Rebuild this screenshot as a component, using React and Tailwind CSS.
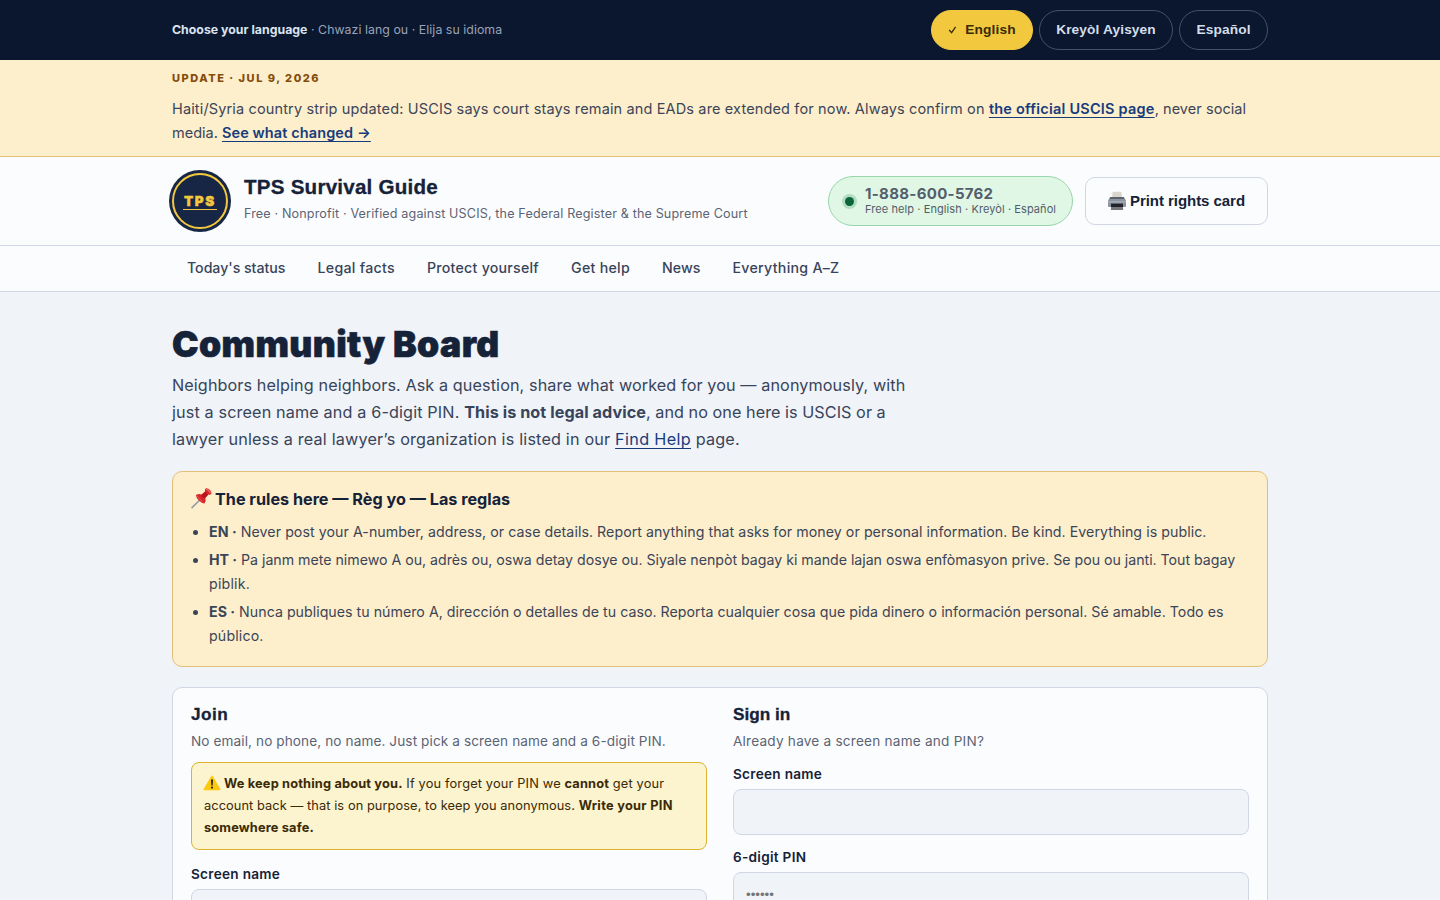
import { useState } from 'react';

const languages = [
  { name: 'English', box: 'w-[102px]' },
  { name: 'Kreyòl Ayisyen', box: 'w-[134px]' },
  { name: 'Español', box: 'w-[89px]' },
];

const navItems = [
  { label: "Today's status", style: 'w-[98.5px] tracking-[-0.04px]' },
  { label: 'Legal facts', style: 'w-[77.5px] tracking-[0.29px]' },
  { label: 'Protect yourself', style: 'w-[112px] tracking-[0.24px]' },
  { label: 'Get help', style: 'w-[59px] tracking-[0.28px]' },
  { label: 'News', style: 'w-[38.5px] tracking-[0.06px]' },
  { label: 'Everything A–Z', style: 'w-[107px] tracking-[0.27px]' },
];

function PrinterIcon() {
  return (
    <svg viewBox="0 0 20 20" className="w-5 h-5 -ml-px mr-px shrink-0">
      <path d="M5 7 L5.6 1.5 Q5.7 0.8 6.4 0.8 H13.6 Q14.3 0.8 14.4 1.5 L15 7 Z" fill="#d9d4cd" />
      <path d="M3.2 6 H16.8 L19 9.5 V15 Q19 16 18 16 H2 Q1 16 1 15 V9.5 Z" fill="#8b939e" />
      <path d="M3.4 6 H16.6 L17.4 8 H2.6 Z" fill="#5b626c" />
      <path d="M1 10 H19 V11.6 H1 Z" fill="#a3aab3" />
      <path d="M4 12.6 H16 V16.4 H4 Z" fill="#20242a" />
      <path d="M4.2 16 H15.8 L16.2 19 H3.8 Z" fill="#77767a" />
    </svg>
  );
}

function PinIcon() {
  return (
    <svg viewBox="0 0 22 22" className="w-[22px] h-[22px] mb-0.5 shrink-0">
      <path d="M9.6 12.2 L1 20.6" stroke="#929aa3" strokeWidth="1.5" strokeLinecap="round" />
      <path d="M4.8 8.2 Q7.2 6.4 10.4 7.4 L14 4.4 Q13.4 2 15 1.2 Q17.2 1 19.2 3.2 Q21 5.2 20.4 7 Q19.4 8.2 17.4 7.6 L14.4 11 Q15.4 14.4 13.4 16.4 Q10.6 16 7.8 13.4 Q5.2 10.6 4.8 8.2 Z" fill="#d9262b" />
      <path d="M10.2 8.6 L14.6 4.6 Q15.4 6.6 17.2 7.6 L13.4 11.4 Q11.2 10.6 10.2 8.6 Z" fill="#b5161f" />
      <path d="M15.2 2.2 Q17.4 2.6 19.4 5.8" stroke="#f36a63" strokeWidth="1.3" fill="none" strokeLinecap="round" />
      <path d="M6 8.8 Q7.4 12 11.4 14.4" stroke="#ee5350" strokeWidth="1" fill="none" strokeLinecap="round" />
    </svg>
  );
}

function WarningIcon() {
  return (
    <svg viewBox="0 0 18 16" className="inline-block w-[18px] h-4 align-[-3px] -ml-px mr-[3px]">
      <path d="M9 1.4 L16.6 14.4 H1.4 Z" fill="#fdc90e" stroke="#fdc90e" strokeWidth="1.6" strokeLinejoin="round" />
      <path d="M8 4.6 H10 L9.7 10.4 H8.3 Z" fill="#2b2410" />
      <circle cx="9" cy="12.6" r="1.1" fill="#2b2410" />
    </svg>
  );
}

function Container({ className = '', children }) {
  return <div className={`w-[1096px] mx-auto ${className}`}>{children}</div>;
}

function Link({ className = '', children }) {
  return (
    <a href="#" className={`text-[#163c7c] underline decoration-1 underline-offset-[3px] [text-decoration-skip-ink:none] ${className}`}>
      {children}
    </a>
  );
}

function LanguageBar() {
  const [current, setCurrent] = useState('English');

  return (
    <div className="bg-[#0b172e] h-[60px]">
      <Container className="h-full flex items-center justify-between">
        <p className="text-[12.3px] text-[#98a3b8] tracking-[0.06px] whitespace-nowrap">
          <strong className="text-[#dce4f0] tracking-[0.02px]">Choose your language</strong> · Chwazi lang ou · Elija su idioma
        </p>
        <div className="flex gap-1.5">
          {languages.map(({ name, box }) => (
            <button
              key={name}
              onClick={() => setCurrent(name)}
              className={`h-10 rounded-full border font-[Liberation_Sans] text-[13.7px] tracking-[0.13px] font-bold flex items-center justify-center whitespace-nowrap pt-px ${box} ${
                current === name ? 'bg-[#f2c83f] border-[#f2c83f] text-[#3a2a06]' : 'border-[#45516b] text-[#d5deeb]'
              }`}
            >
              {current === name && (
                <svg viewBox="0 0 10 10" className="w-2.5 h-2.5 mr-[7px] mb-px" fill="none" stroke="currentColor" strokeWidth="1.3">
                  <path d="M1.2 5 L3.6 7.6 L7.6 1.8" />
                </svg>
              )}
              {name}
            </button>
          ))}
        </div>
      </Container>
    </div>
  );
}

function UpdateBanner() {
  return (
    <div className="bg-[#fdeecc] border-b border-[#e3c078] h-[97px] pt-2.5">
      <Container>
        <div className="text-[11px] leading-4 font-extrabold tracking-[1.52px] text-[#854d0b]">UPDATE · JUL 9, 2026</div>
        <p className="mt-[11px] text-[14.5px] leading-6 tracking-[0.143px] text-[#3b4557] whitespace-nowrap">
          Haiti/Syria country strip updated: USCIS says court stays remain and EADs are extended for now. Always confirm on{' '}
          <Link className="font-semibold tracking-[0.22px]">the official USCIS page</Link>
          <span className="tracking-[0.06px]">, never social</span>
          <br />
          <span className="tracking-normal">media. </span>
          <Link className="font-semibold tracking-[0.1px]">See what changed →</Link>
        </p>
      </Container>
    </div>
  );
}

function Header() {
  return (
    <header className="bg-[#fbfcfe] border-b border-[#d0d6e3] h-[89px]">
      <Container className="h-full flex items-center">
        <div className="w-14 h-14 rounded-full border-2 border-[#f2c83f] bg-[#172645] ring-3 ring-[#172645] flex items-center justify-center shrink-0">
          <span className="w-[34px] h-[18px] border-b border-[#f2c83f] text-[13.5px] leading-[18px] font-black tracking-[1.5px] text-[#f2c83f] [-webkit-text-stroke:0.4px_#f2c83f] pl-px whitespace-nowrap">TPS</span>
        </div>
        <div className="ml-4 flex-1 whitespace-nowrap">
          <div className="font-[Liberation_Sans] text-[20.6px] leading-6 font-bold tracking-[0.22px] text-[#152238] [-webkit-text-stroke:0.3px_#152238]">TPS Survival Guide</div>
          <div className="text-[12.6px] leading-5 tracking-[0.137px] text-[#5b6474] pt-[5px] mb-1">
            Free · Nonprofit · Verified against USCIS, the Federal Register &amp; the Supreme Court
          </div>
        </div>
        <a href="#" className="w-[245px] h-[50px] rounded-full bg-[#dff7e4] border border-[#97d6ab] flex items-center pl-4 whitespace-nowrap">
          <span className="w-[9px] h-[9px] rounded-full bg-[#0a6639] ring-3 ring-[#b3dcc1] shrink-0" />
          <span className="ml-[11px] mb-0.5 flex flex-col text-[#545d6b]">
            <span className="text-[15px] leading-[17px] font-bold tracking-[0.31px]">1-888-600-5762</span>
            <span className="text-[11px] leading-[14px] tracking-[0.084px]">Free help · English · Kreyòl · Español</span>
          </span>
        </a>
        <button className="ml-3 w-[183px] h-12 rounded-[10px] border border-[#d0d6e3] font-[Liberation_Sans] text-[15px] font-bold text-[#152238] flex items-center gap-0.5 pl-[22px] whitespace-nowrap">
          <PrinterIcon />
          <span className="tracking-[-0.05px]">Print rights card</span>
        </button>
      </Container>
    </header>
  );
}

function Nav() {
  return (
    <nav className="bg-[#fbfcfe] border-b border-[#d0d6e3] h-[46px]">
      <Container className="h-full flex items-center gap-8 pl-[15px] pb-0.5 text-[14.2px] font-medium text-[#38445a]">
        {navItems.map((item) => (
          <a key={item.label} href="#" className={`whitespace-nowrap ${item.style}`}>{item.label}</a>
        ))}
      </Container>
    </nav>
  );
}

function Rules() {
  return (
    <section className="mt-[18px] h-[196px] rounded-[10px] border border-[#e3c078] bg-[#fdeecc] px-[18px] pt-[15px]">
      <h2 className="flex items-center gap-0.5 h-6 text-[16.2px] font-bold text-[#152238] whitespace-nowrap">
        <PinIcon />
        The rules here — Règ yo — Las reglas
      </h2>
      <ul className="mt-[9px] pl-[18px] list-disc flex flex-col gap-1 text-[14.2px] leading-6 text-[#3b4557] whitespace-nowrap">
        <li className="tracking-[0.056px]">
          <strong>EN ·</strong> Never post your A-number, address, or case details. Report anything that asks for money or personal information. Be kind. Everything is public.
        </li>
        <li className="tracking-[-0.022px]">
          <strong>HT ·</strong> Pa janm mete nimewo A ou, adrès ou, oswa detay dosye ou. Siyale nenpòt bagay ki mande lajan oswa enfòmasyon prive. Se pou ou janti. Tout bagay
          <br />
          <span className="tracking-[0.2px]">piblik.</span>
        </li>
        <li className="tracking-[0.022px]">
          <strong>ES ·</strong> Nunca publiques tu número A, dirección o detalles de tu caso. Reporta cualquier cosa que pida dinero o información personal. Sé amable. Todo es
          <br />
          <span className="tracking-[0.15px]">público.</span>
        </li>
      </ul>
    </section>
  );
}

function Field({ label, placeholder, className = '' }) {
  return (
    <label className={`block ${className}`}>
      <span className="block text-[13.6px] leading-5 font-semibold tracking-[0.28px] text-[#152238]">{label}</span>
      <input
        placeholder={placeholder}
        className="mt-[5px] block w-full h-[46px] rounded-lg border border-[#d0d6e3] bg-[#f0f3f8] px-3 pb-1 text-[16px] placeholder:text-[#757575] placeholder:text-[13.3px] placeholder:font-[Liberation_Sans]"
      />
    </label>
  );
}

function Accounts() {
  return (
    <section className="mt-5 rounded-[10px] border border-[#d0d6e3] bg-[#fbfcfe] px-[18px] pt-3.5 h-[420px] grid grid-cols-2 gap-[26px] whitespace-nowrap">
      <div>
        <h2 className="font-[Liberation_Sans] text-[17.2px] leading-6 font-bold tracking-[0.5px] text-[#152238] [-webkit-text-stroke:0.3px_#152238]">Join</h2>
        <p className="mt-1 text-[13.6px] leading-[22px] tracking-[0.1px] text-[#5b6474]">
          No email, no phone, no name. Just pick a screen name and a 6-digit PIN.
        </p>
        <div className="mt-2.5 h-[88px] rounded-lg border border-[#ddb32f] bg-[#fcf3cf] px-3 pt-2.5 text-[12.8px] leading-[22px] tracking-[0.16px] text-[#3a2a06]">
          <p className="h-[22px]">
            <WarningIcon />
            <strong>We keep nothing about you.</strong> If you forget your PIN we <strong>cannot</strong> get your
          </p>
          <p>
            <span className="tracking-[0.08px]">account back — that is on purpose, to keep you anonymous. </span>
            <strong className="tracking-[0.29px]">Write your PIN</strong>
          </p>
          <p><strong>somewhere safe.</strong></p>
        </div>
        <Field label="Screen name" className="mt-3.5" />
      </div>
      <div>
        <h2 className="font-[Liberation_Sans] text-[17.2px] leading-6 font-bold text-[#152238] [-webkit-text-stroke:0.3px_#152238]">Sign in</h2>
        <p className="mt-1 text-[13.6px] leading-[22px] tracking-[0.22px] text-[#5b6474]">Already have a screen name and PIN?</p>
        <Field label="Screen name" className="mt-3" />
        <Field label="6-digit PIN" placeholder="••••••" className="mt-3" />
      </div>
    </section>
  );
}

function App() {
  return (
    <div className="h-[900px] overflow-hidden bg-[#f0f3f8] font-[Inter,sans-serif]">
      <LanguageBar />
      <UpdateBanner />
      <Header />
      <Nav />

      <main>
        <Container className="pt-8">
          <h1 className="text-[35.5px] leading-[42px] font-black tracking-[0.4px] text-[#152238] [-webkit-text-stroke:0.6px_#152238]">Community Board</h1>
          <p className="mt-[6px] text-[16.2px] leading-[27px] tracking-[0.1px] text-[#38445a] whitespace-nowrap">
            Neighbors helping neighbors. Ask a question, share what worked for you — anonymously, with
            <br />
            <span className="tracking-[0.14px]">just a screen name and a 6-digit PIN. </span>
            <strong className="tracking-[0.07px]">This is not legal advice</strong>
            <span className="tracking-[0.05px]">, and no one here is USCIS or a</span>
            <br />
            <span className="tracking-[0.18px]">
              lawyer unless a real lawyer’s organization is listed in our <Link className="tracking-[0.34px]">Find Help</Link> page.
            </span>
          </p>
          <Rules />
          <Accounts />
        </Container>
      </main>
    </div>
  );
}

export default App;
